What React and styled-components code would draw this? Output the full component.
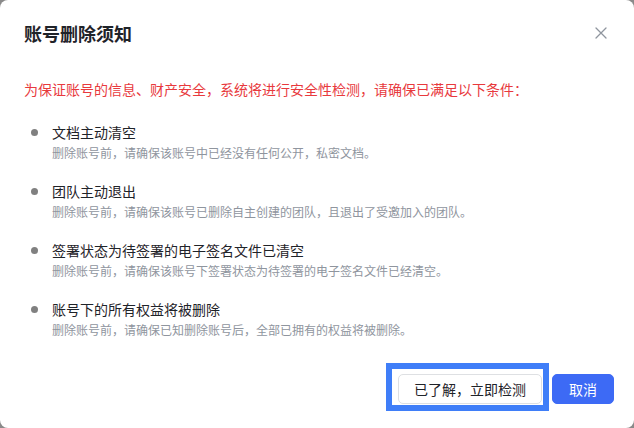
import React from 'react'
import styled, { createGlobalStyle } from 'styled-components'

const GlobalStyle = createGlobalStyle`
  html, body {
    margin: 0;
    padding: 0;
    background: #8a8a8a;
  }
  body {
    font-family: "Noto Sans CJK SC", "Noto Sans", sans-serif;
  }
`

const rules = [
  { title: '文档主动清空', desc: '删除账号前，请确保该账号中已经没有任何公开，私密文档。' },
  { title: '团队主动退出', desc: '删除账号前，请确保该账号已删除自主创建的团队，且退出了受邀加入的团队。' },
  { title: '签署状态为待签署的电子签名文件已清空', desc: '删除账号前，请确保该账号下签署状态为待签署的电子签名文件已经清空。' },
  { title: '账号下的所有权益将被删除', desc: '删除账号前，请确保已知删除账号后，全部已拥有的权益将被删除。' },
]

const Dialog = () => {
  return (
    <Modal>
      <Header>
        <Title>账号删除须知</Title>
        <CloseButton aria-label="关闭">
          <svg width="12" height="12" viewBox="0 0 12 12">
            <path d="M1 1 L11 11 M11 1 L1 11" stroke="#8f959e" strokeWidth="1.3" strokeLinecap="round" />
          </svg>
        </CloseButton>
      </Header>
      <Notice>为保证账号的信息、财产安全，系统将进行安全性检测，请确保已满足以下条件：</Notice>
      <RuleList>
        {rules.map((r) => (
          <RuleItem key={r.title}>
            <RuleTitle>{r.title}</RuleTitle>
            <RuleDesc>{r.desc}</RuleDesc>
          </RuleItem>
        ))}
      </RuleList>
      <Footer>
        <Button $marked>已了解，立即检测</Button>
        <Button $primary>取消</Button>
      </Footer>
    </Modal>
  )
}

const Modal = styled.div`
  box-sizing: border-box;
  width: 634px;
  height: 428px;
  background: #fff;
  border-radius: 8px;
  display: flex;
  flex-direction: column;
  padding: 0 20px 0 24px;
`

const Header = styled.div`
  height: 66px;
  display: flex;
  align-items: center;
  justify-content: space-between;
`

const Title = styled.h2`
  margin: 0;
  font-size: 18px;
  font-weight: 700;
  line-height: 26px;
  color: #1f2329;
`

const CloseButton = styled.button`
  width: 20px;
  height: 20px;
  margin-right: 3px;
  padding: 0;
  border: none;
  background: none;
  display: flex;
  align-items: center;
  justify-content: center;
  cursor: pointer;
`

const Notice = styled.p`
  margin: 12px 0 0;
  font-size: 14px;
  line-height: 22px;
  color: #e8393d;
`

const RuleList = styled.ul`
  list-style: none;
  margin: 21px 0 0;
  padding: 0 0 0 28px;
  display: flex;
  flex-direction: column;
  gap: 17px;
`

const RuleItem = styled.li`
  position: relative;
  &::before {
    content: '';
    position: absolute;
    left: -21px;
    top: 8px;
    width: 7px;
    height: 7px;
    border-radius: 50%;
    background: #808080;
  }
`

const RuleTitle = styled.div`
  font-size: 14px;
  line-height: 22px;
  color: #1f2329;
`

const RuleDesc = styled.div`
  font-size: 12px;
  line-height: 20px;
  color: #8f959e;
`

const Footer = styled.div`
  margin-top: auto;
  padding-bottom: 24px;
  display: flex;
  justify-content: flex-end;
  gap: 10px;
`

const Button = styled.button`
  position: relative;
  box-sizing: border-box;
  height: 30px;
  padding: 0 ${(p) => (p.$primary ? '16px' : '15px')};
  min-width: 60px;
  font-family: inherit;
  font-size: 14px;
  border-radius: 5px;
  cursor: pointer;
  border: 1px solid ${(p) => (p.$primary ? '#3d6af5' : '#dee0e3')};
  background: ${(p) => (p.$primary ? '#3d6af5' : '#fff')};
  color: ${(p) => (p.$primary ? '#fff' : '#1f2329')};
  ${(p) =>
    p.$marked &&
    `
    &::after {
      content: '';
      position: absolute;
      left: -13px;
      top: -12px;
      right: -8px;
      bottom: -8px;
      border: 6px solid #3f7ef8;
      pointer-events: none;
    }
  `}
`

export default function App() {
  return (
    <>
      <GlobalStyle />
      <Dialog />
    </>
  )
}
